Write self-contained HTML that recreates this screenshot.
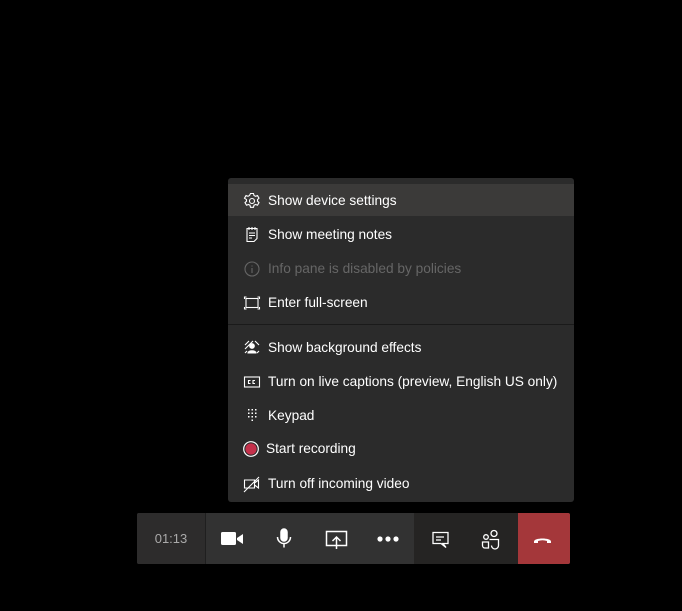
<!DOCTYPE html>
<html><head><style>
body{margin:0;width:682px;height:611px;background:#000;position:relative;overflow:hidden;font-family:"Liberation Sans",sans-serif}
.menu{position:absolute;left:228px;top:178px;width:346px;height:324px;background:#2b2b2b;border-radius:3px}
.row{position:absolute;left:0;width:346px;height:32px;color:#fff;font-size:13.7px;line-height:34px}
.row span{position:absolute;left:40px}
.row svg{position:absolute;left:15px;top:8px}
.hl{background:#3b3a39}
.dis{color:#666}
.sep{position:absolute;left:0;top:146px;width:346px;height:1px;background:#1a1a1a}
.bar{position:absolute;left:137px;top:513px;width:433px;height:51px;background:#323232;border-radius:2px;overflow:hidden}
.b{position:absolute;top:0;height:51px}
</style></head><body>
<div class="menu">
<div class="row hl" style="top:6px"><svg width="18" height="18" viewBox="0 0 18 18" fill="none" stroke="#fff" stroke-width="1.1"><circle cx="9" cy="9" r="2.5"/><path d="M7.5 1.5h3l.5 2 1.5.8 2-.7 1.5 2.6-1.5 1.4v1.6l1.5 1.4-1.5 2.6-2-.7-1.5.8-.5 2h-3l-.5-2-1.5-.8-2 .7-1.5-2.6 1.5-1.4V7.6L1.5 6.2 3 3.6l2 .7 1.5-.8z"/></svg><span>Show device settings</span></div>
<div class="row" style="top:40px"><svg width="18" height="18" viewBox="0 0 18 18" fill="none" stroke="#fff" stroke-width="1.1"><path d="M4 2.5h10v10l-3 3H4z M6 1v3 M9 1v3 M12 1v3 M6 7h6 M6 9.5h6 M6 12h3"/></svg><span>Show meeting notes</span></div>
<div class="row dis" style="top:74px"><svg width="18" height="18" viewBox="0 0 18 18" fill="none" stroke="#666" stroke-width="1.1"><circle cx="9" cy="9" r="7"/><path d="M9 8v5M9 5.5v1"/></svg><span>Info pane is disabled by policies</span></div>
<div class="row" style="top:108px"><svg width="18" height="18" viewBox="0 0 18 18" fill="none" stroke="#fff" stroke-width="1.1"><rect x="3" y="4.5" width="12" height="9"/><path d="M1.5 5V3h2M14.5 3h2v2M16.5 13v2h-2M3.5 15h-2v-2"/></svg><span>Enter full-screen</span></div>
<div class="sep"></div>
<div class="row" style="top:153px"><svg width="18" height="18" viewBox="0 0 18 18" fill="none" stroke="#fff" stroke-width="1.1"><circle cx="9" cy="7" r="2.3" fill="#fff"/><path d="M5 14c0-3 8-3 8 0z" fill="#fff"/><path d="M2 6l4-4M2 10l8-8M12 2l4 4M14 14l2-2M2 14l2-2"/></svg><span>Show background effects</span></div>
<div class="row" style="top:187px"><svg width="18" height="18" viewBox="0 0 18 18" fill="none" stroke="#fff" stroke-width="1.1"><rect x="1.5" y="4" width="15" height="10"/><path d="M7.5 7.5h-2v3h2M12 7.5h-2v3h2"/></svg><span>Turn on live captions (preview, English US only)</span></div>
<div class="row" style="top:221px"><svg width="18" height="18" viewBox="0 0 18 18" fill="#fff"><g><rect x="5" y="2" width="1.5" height="1.5"/><rect x="8.5" y="2" width="1.5" height="1.5"/><rect x="12" y="2" width="1.5" height="1.5"/><rect x="5" y="5.5" width="1.5" height="1.5"/><rect x="8.5" y="5.5" width="1.5" height="1.5"/><rect x="12" y="5.5" width="1.5" height="1.5"/><rect x="5" y="9" width="1.5" height="1.5"/><rect x="8.5" y="9" width="1.5" height="1.5"/><rect x="12" y="9" width="1.5" height="1.5"/><rect x="8.5" y="12.5" width="1.5" height="1.5"/></g></svg><span>Keypad</span></div>
<div class="row" style="top:254px"><svg width="18" height="18" viewBox="0 0 18 18" style="left:14px"><circle cx="9" cy="9" r="7.3" fill="none" stroke="#fff" stroke-width="1.2"/><circle cx="9" cy="9" r="5.6" fill="#c4314b"/></svg><span style="left:38px">Start recording</span></div>
<div class="row" style="top:289px"><svg width="18" height="18" viewBox="0 0 18 18" fill="none" stroke="#fff" stroke-width="1.1"><path d="M1.5 5h10v8h-10z M11.5 8l4-3v8l-4-3 M1 17L16 2"/></svg><span>Turn off incoming video</span></div>
</div>
<div class="bar">
<div class="b" style="left:0;width:68px;background:#2d2c2c;color:#aaa;font-size:13px;line-height:51px;text-align:center;border-right:1px solid #1f1f1f">01:13</div>
<div class="b" style="left:277px;width:104px;background:#252423"></div>
<div class="b" style="left:381px;width:52px;background:#a4373a"></div>
<svg class="b" style="left:0" width="433" height="51" viewBox="0 0 433 51">
<g fill="#fff"><rect x="84" y="19" width="15" height="13" rx="1.5"/><path d="M100 25l6-4v10l-6-4z"/></g>
<g fill="none" stroke="#fff" stroke-width="1.5"><rect x="144" y="16" width="6" height="12" rx="3" fill="#fff"/><path d="M140.5 24a6.5 6.5 0 0 0 13 0M147 30.5v4"/>
<path d="M189.5 18.5h20v14h-20z M199.5 36v-12M195.5 28l4-4 4 4"/></g>
<g fill="#fff"><circle cx="243" cy="26" r="2.6"/><circle cx="251" cy="26" r="2.6"/><circle cx="259" cy="26" r="2.6"/></g>
<g fill="none" stroke="#fff" stroke-width="1.3"><path d="M296 19.5h15v11h-5l3 4-5-4h-8z M299 24h8M299 27h5"/>
<circle cx="357" cy="20.5" r="3"/><circle cx="349" cy="24" r="2.3"/><path d="M345.5 29h6v6h-3.5a2.5 2.5 0 0 1-2.5-2.5z M352.5 26.5h9v6a3.5 3.5 0 0 1-7 0"/></g>
<path d="M397 28.5c0-4 17-4 17 0v1.5h-4v-2c-3-1-6-1-9 0v2h-4z" fill="#fff"/>
</svg>
</div>
</body></html>
